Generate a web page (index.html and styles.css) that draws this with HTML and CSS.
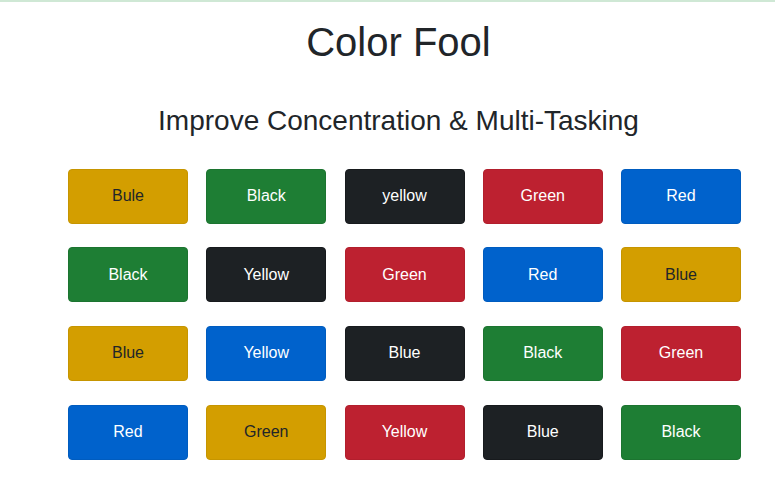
FILE: index.html
```html
<!DOCTYPE html>
<html lang="en">
<head>
  <meta charset="UTF-8" />
  <meta name="viewport" content="width=device-width, initial-scale=1.0"/>
  <title>Color Fool</title>
  <link rel="stylesheet" href="styles.css">
</head>
<body>
  <div class="contenedor">
    <h1>Color Fool</h1>
    <h2>Improve Concentration &amp; Multi-Tasking</h2>

    <div class="tablero">
      <button class="btn amarillo">Bule</button>
      <button class="btn verde">Black</button>
      <button class="btn negro">yellow</button>
      <button class="btn rojo">Green</button>
      <button class="btn azul">Red</button>

      <button class="btn verde">Black</button>
      <button class="btn negro">Yellow</button>
      <button class="btn rojo">Green</button>
      <button class="btn azul">Red</button>
      <button class="btn amarillo">Blue</button>

      <button class="btn amarillo">Blue</button>
      <button class="btn azul">Yellow</button>
      <button class="btn negro">Blue</button>
      <button class="btn verde">Black</button>
      <button class="btn rojo">Green</button>

      <button class="btn azul">Red</button>
      <button class="btn amarillo">Green</button>
      <button class="btn rojo">Yellow</button>
      <button class="btn negro">Blue</button>
      <button class="btn verde">Black</button>
    </div>
  </div>
</body>
</html>
```

FILE: styles.css
```css
body {
  margin: 0;
  font-family: "Liberation Sans", Arial, sans-serif;
  color: #212529;
  background: #fff;
  border-top: 2px solid #cfe8d5;
}

.contenedor {
  text-align: center;
  padding-left: 22px;
}

h1 {
  font-size: 40px;
  font-weight: 400;
  line-height: 1.2;
  margin: 16px 0 0;
}

h2 {
  font-size: 28px;
  font-weight: 400;
  line-height: 1.2;
  margin: 38px 0 0;
}

.tablero {
  display: grid;
  grid-template-columns: repeat(5, 120px);
  column-gap: 18.25px;
  row-gap: 23.7px;
  padding-left: 46px;
  margin-top: 31px;
}

.btn {
  height: 55px;
  border: 1px solid transparent;
  border-radius: 4px;
  font-family: inherit;
  font-size: 16px;
  color: #fff;
}

.amarillo {
  background-color: #d39e00;
  border-color: #c69500;
  color: #212529;
}

.verde {
  background-color: #1e7e34;
  border-color: #1c7430;
}

.negro {
  background-color: #1d2124;
  border-color: #171a1d;
}

.rojo {
  background-color: #bd2130;
  border-color: #b21f2d;
}

.azul {
  background-color: #0062cc;
  border-color: #005cbf;
}
```
